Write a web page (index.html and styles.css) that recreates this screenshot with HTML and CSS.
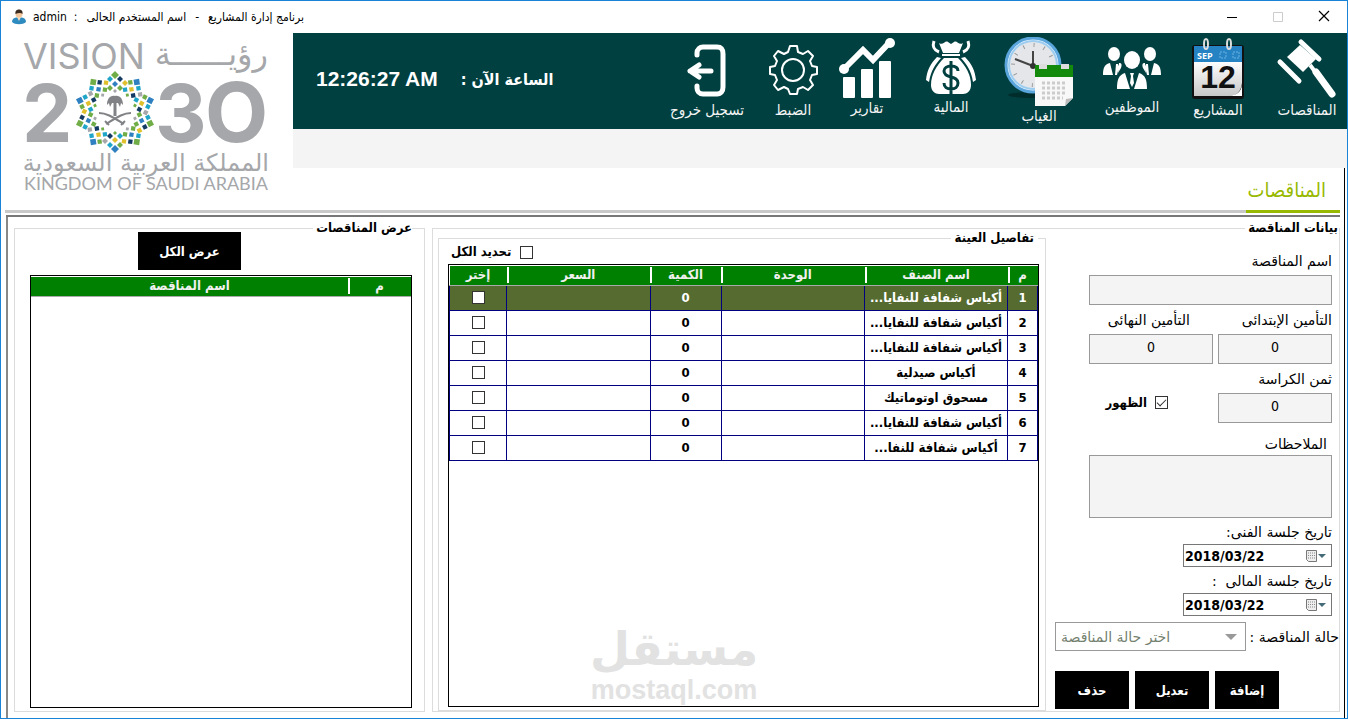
FILE: index.html
```html
<!DOCTYPE html>
<html lang="ar" dir="rtl">
<head>
    <meta charset="UTF-8">
    <meta name="viewport" content="width=device-width, initial-scale=1.0">
    <title>برنامج إدارة المشاريع</title>
    <link rel="stylesheet" href="styles.css">
</head>
<body>
<div class="window">
    <div class="titlebar">
        <div class="window-buttons">
            <button type="button" aria-label="إغلاق"><svg width="12" height="12" viewBox="0 0 12 12"><path d="M1 1l10 10M11 1L1 11" stroke="#000" stroke-width="1.2"/></svg></button>
            <button type="button" aria-label="تكبير" disabled><svg width="10" height="10" viewBox="0 0 10 10"><path d="M.5.5h9v9h-9z" fill="none" stroke="#ccc"/></svg></button>
            <button type="button" aria-label="تصغير"><svg width="10" height="10" viewBox="0 0 10 10"><path d="M0 5.500h10" stroke="#000"/></svg></button>
        </div>
        <div class="window-title">
            <span>برنامج إدارة المشاريع</span><span>-</span><span>اسم المستخدم الحالى</span><span>:</span><span>admin</span>
            <svg width="14" height="16" viewBox="0 0 14 16">
                <path d="M0 13c0-3 2-4 4-4.500h6c2 .5 4 1.500 4 4.500-3 3-11 3-14 0z" fill="#2e8bc0"/>
                <path d="M5 8h4l-2 4z" fill="#f7dcc0"/>
                <circle cx="7" cy="5" r="3.500" fill="#f3c79b"/>
                <path d="M3.500 5C3 1.500 5 .5 7 .5s4 1 3.500 4.500C9 3.500 6 4 3.500 5z" fill="#3b2a20"/>
            </svg>
        </div>
    </div>

    <header class="header">
        <div class="header-main">
            <div class="topbar">
                <nav class="toolbar">
                    <button type="button">
                        <svg width="62" height="63" viewBox="0 0 62 63" fill="#fff">
                            <path d="M11 20l13-12 16 14-13 13z"/>
                            <path d="M25 5l18 17M4 25l19 19" stroke="#fff" stroke-width="5" stroke-linecap="round"/>
                            <path d="M34 28L56 57" stroke="#fff" stroke-width="4"/>
                            <path d="M40 35L56 57" stroke="#fff" stroke-width="7" stroke-linecap="round"/>
                        </svg>
                        <span>المناقصات</span>
                    </button>
                    <button type="button">
                        <svg width="54" height="63" viewBox="0 0 54 63" direction="ltr">
                            <defs>
                                <linearGradient id="page" x2="0" y2="1"><stop offset="0" stop-color="#fff"/><stop offset="1" stop-color="#c8c8c8"/></linearGradient>
                            </defs>
                            <rect x="1" y="8" width="52" height="54" rx="3" fill="#111"/>
                            <path d="M3 24h48v22c-1 8-5 13-13 13H3z" fill="url(#page)"/>
                            <path d="M38 59c8-1 12-4 13-11v11z" fill="#fff"/>
                            <path d="M3 9h48v16H3z" fill="#2583c4"/>
                            <text x="6" y="22" class="cal-month">SEP</text>
                            <path d="M29 15h6v6h-6zM42 15h6v6h-6z" fill="none" stroke="#6db2df" stroke-dasharray="2 1"/>
                            <g fill="none" stroke="#ddd" stroke-width="2"><ellipse cx="15" cy="7" rx="2" ry="5"/><ellipse cx="38" cy="7" rx="2" ry="5"/></g>
                            <text x="27" y="51" text-anchor="middle" class="cal-day">12</text>
                        </svg>
                        <span>المشاريع</span>
                    </button>
                    <button type="button">
                        <svg width="60" height="60" viewBox="0 0 60 60" fill="#fff">
                            <ellipse cx="12" cy="17" rx="6" ry="7"/><ellipse cx="48" cy="17" rx="6" ry="7"/>
                            <path d="M1 38c0-8 2-11 7-12l3 12zM14 27h2l1 3-2 8h-2zM17 26c3 0 3 2 2 5l-3 5z"/>
                            <path d="M59 38c0-8-2-11-7-12l-3 12zM46 27h-2l-1 3 2 8h2zM43 26c-3 0-3 2-2 5l3 5z"/>
                            <ellipse cx="30" cy="23" rx="8" ry="9"/>
                            <path d="M15 52c0-10 2-14 8-16l5 16zM45 52c0-10-2-14-8-16l-5 16zM28 36h4l-1 3 1 7-2 4-2-4 1-7z"/>
                        </svg>
                        <span>الموظفين</span>
                    </button>
                    <button type="button">
                        <svg width="72" height="69" viewBox="0 0 72 69">
                            <ellipse cx="30" cy="58" rx="25" ry="3" fill="#002c2c"/>
                            <circle cx="30" cy="28" r="27" fill="#eef7fd" stroke="#5aa5dc" stroke-width="3"/>
                            <circle cx="30" cy="28" r="24" fill="#e4e6e9" stroke="#9ccdf0" stroke-width="2"/>
                            <circle cx="30" cy="28" r="20" fill="none" stroke="#9a9a9a" stroke-width="4" stroke-dasharray="1 9.470"/>
                            <path d="M30 29V14M30 29L12 22" stroke="#444" stroke-width="2"/>
                            <circle cx="30" cy="29" r="3" fill="#333"/>
                            <path d="M32 31h38v30l-8 8H32z" fill="#f8f8f8"/>
                            <path d="M32 28h38v12H32z" fill="#148a0c"/>
                            <path d="M36 27h8v5h-8zM58 27h8v5h-8z" fill="#ddd"/>
                            <path d="M39 46h25M39 51h25M39 56h25M39 61h21" stroke="#ccc" stroke-width="3" stroke-dasharray="3 2"/>
                            <path d="M62 69l1-7 7-1z" fill="#bbb"/>
                        </svg>
                        <span>الغياب</span>
                    </button>
                    <button type="button">
                        <svg width="52" height="60" viewBox="0 0 52 60" fill="#fff">
                            <path d="M14 6c4 3 6-3 9-1l3 2 3-2c3-2 5 4 9 1l-4 10H18z"/>
                            <path d="M17 17h18v2H17z"/>
                            <path d="M9 4c-2 6 0 9 5 11M43 4c2 6 0 9-5 11" fill="none" stroke="#fff" stroke-width="3"/>
                            <path d="M12 20C5 27 2 34 1 43l3 2c2-12 6-17 12-24zM40 20c7 7 10 14 11 23l-3 2c-2-12-6-17-12-24z"/>
                            <path d="M19 21h14c8 8 13 17 13 27 0 6-4 9-8 9H14c-4 0-8-3-8-9 0-10 5-19 13-27z"/>
                            <path d="M33 34c0-4-3-5-7-5s-7 2-7 5 3 5 7 6 7 2 7 6-3 6-7 6-7-2-7-6M26 24v33" fill="none" stroke="#004040" stroke-width="3"/>
                        </svg>
                        <span>المالية</span>
                    </button>
                    <button type="button">
                        <svg width="56" height="61" viewBox="0 0 56 61" fill="#fff">
                            <rect x="4" y="40" width="12" height="21" rx="1"/><rect x="22" y="32" width="12" height="29" rx="1"/><rect x="40" y="24" width="12" height="37" rx="1"/>
                            <path d="M5 32L24 13l10 10L50 6" fill="none" stroke="#fff" stroke-width="6"/>
                            <circle cx="5" cy="32" r="5"/><circle cx="51" cy="6" r="5"/>
                        </svg>
                        <span>تقارير</span>
                    </button>
                    <button type="button">
                        <svg width="50" height="63" viewBox="0 0 50 63" fill="none" stroke="#fff" stroke-width="2" stroke-linejoin="round">
                            <path d="M22 9h7l1 6 5 2 5-3 5 5-3 5 2 5 5 1v7l-5 1-2 5 3 5-5 5-5-3-5 2-1 5h-7l-2-5-4-2-6 3-4-5 3-5-2-5-5-1v-7l5-1 2-5-3-5 4-5 6 3 4-2z"/>
                            <circle cx="25" cy="33" r="11"/>
                        </svg>
                        <span>الضبط</span>
                    </button>
                    <button type="button">
                        <svg width="44" height="63" viewBox="0 0 44 63" fill="none" stroke="#fff" stroke-width="5" stroke-linecap="round" stroke-linejoin="round">
                            <path d="M12 18v-2c0-4 3-6 6-6h14c5 0 6 3 6 7v33c0 4-2 7-6 7H18c-4 0-6-3-6-6v-2"/>
                            <path d="M26 34H5M14 28l-9 6 9 6"/>
                        </svg>
                        <span>تسجيل خروج</span>
                    </button>
                </nav>
                <div class="clock">
                    <span class="clock-label">الساعة الآن :</span>
                    <time dir="ltr">12:26:27 AM</time>
                </div>
            </div>
            <div class="subbar"></div>
            <div class="tabs"><a href="#bids" class="tab">المناقصات</a></div>
        </div>
        <svg class="logo" width="292" height="176" viewBox="0 0 292 176" direction="ltr" role="img" aria-label="رؤية 2030 المملكة العربية السعودية">
            <defs>
                <g id="petal-a">
                    <path d="M0-41l4 4-4 4-4-4z" fill="#70ad47"/>
                    <path d="M-5-36l3 3-3 3-3-3z" fill="#1fa5c8"/><path d="M5-36l3 3-3 3-3-3z" fill="#123a63"/>
                    <path d="M0-31l3 3-3 3-3-3z" fill="#2e80c0"/><path d="M10-32l3 3-3 3-3-3z" fill="#e0c02c"/>
                    <path d="M-5-27l3 3-3 3-3-3zM5-27l3 3-3 3-3-3z" fill="#70ad47"/><path d="M0-23l2 2-2 2-2-2z" fill="#a5a7aa"/>
                </g>
                <g id="petal-b">
                    <path d="M0-41l4 4-4 4-4-4z" fill="#2e80c0"/>
                    <path d="M-5-36l3 3-3 3-3-3z" fill="#70ad47"/><path d="M5-36l3 3-3 3-3-3z" fill="#1fa5c8"/>
                    <path d="M0-31l3 3-3 3-3-3z" fill="#e0c02c"/><path d="M10-32l3 3-3 3-3-3z" fill="#a5a7aa"/>
                    <path d="M-5-27l3 3-3 3-3-3z" fill="#1fa5c8"/><path d="M5-27l3 3-3 3-3-3z" fill="#123a63"/><path d="M0-23l2 2-2 2-2-2z" fill="#70ad47"/>
                </g>
            </defs>
            <g fill="#a5a7aa">
                <text x="22" y="36" class="logo-vision">VISION</text>
                <text x="267" y="32" class="logo-roya" direction="rtl">رؤيــــــة</text>
                <text x="21" y="109" class="logo-year">2</text>
                <text x="154" y="109" class="logo-year">3</text>
                <text x="204" y="109" class="logo-year logo-ring">O</text>
                <text x="268" y="138" class="logo-ksa-ar" direction="rtl">المملكة العربية السعودية</text>
                <text x="23" y="157" class="logo-ksa">KINGDOM OF SAUDI ARABIA</text>
            </g>
            <g transform="translate(114 79)">
                <use href="#petal-a"/>
                <use href="#petal-b" transform="rotate(36)"/>
                <use href="#petal-b" transform="rotate(72)"/>
                <use href="#petal-a" transform="rotate(108)"/>
                <use href="#petal-a" transform="rotate(144)"/>
                <use href="#petal-b" transform="rotate(180)"/>
                <use href="#petal-b" transform="rotate(216)"/>
                <use href="#petal-a" transform="rotate(252)"/>
                <use href="#petal-b" transform="rotate(288)"/>
                <use href="#petal-a" transform="rotate(324)"/>
                <path d="M0-16c5-1 8 3 8 9l-2-2-1 4-2-4h-6l-2 4-1-4-2 2c0-6 3-10 8-9z" fill="#808285"/>
                <g fill="none" stroke="#808285" stroke-width="2">
                    <path d="M0-12V4" stroke-width="3"/>
                    <path d="M-16 1C-9 1-4 4 9 12M16 1C9 1 4 4-9 12M-10 9l4 4M10 9l-4 4"/>
                </g>
            </g>
        </svg>
    </header>

    <main class="pane" id="bids">
        <fieldset class="group bid">
            <legend>بيانات المناقصة</legend>
            <form class="bid-form">
                <div class="field">
                    <label for="bidName">اسم المناقصة</label>
                    <input type="text" id="bidName">
                </div>
                <div class="field-row">
                    <div class="field">
                        <label for="firstDeposit">التأمين الإبتدائى</label>
                        <input type="text" id="firstDeposit" value="0">
                    </div>
                    <div class="field">
                        <label for="finalDeposit" class="label-inset">التأمين النهائى</label>
                        <input type="text" id="finalDeposit" value="0">
                    </div>
                </div>
                <div class="field-row">
                    <div class="field">
                        <label for="price">ثمن الكراسة</label>
                        <input type="text" id="price" value="0">
                    </div>
                    <label class="check visible-check"><input type="checkbox" checked><span>الظهور</span></label>
                </div>
                <div class="field notes">
                    <label for="notes">الملاحظات</label>
                    <textarea id="notes"></textarea>
                </div>
                <div class="field date-field">
                    <label for="techDate">تاريخ جلسة الفنى:</label>
                    <div class="date-box">
                        <input type="text" id="techDate" value="2018/03/22">
                        <button type="button" aria-label="التقويم">
                            <svg width="22" height="14" viewBox="0 0 22 14"><path d="M1.500 1.500h10v11h-8l-2-2z" fill="#eee" stroke="#777"/><path d="M3 4h7M3 6.500h7M3 9h7" stroke="#888" stroke-dasharray="1 1"/><path d="M13 5h8l-4 4z" fill="#456b78"/></svg>
                        </button>
                    </div>
                </div>
                <div class="field date-field">
                    <label for="financeDate">تاريخ جلسة المالى &nbsp;:</label>
                    <div class="date-box">
                        <input type="text" id="financeDate" value="2018/03/22">
                        <button type="button" aria-label="التقويم">
                            <svg width="22" height="14" viewBox="0 0 22 14"><path d="M1.500 1.500h10v11h-8l-2-2z" fill="#eee" stroke="#777"/><path d="M3 4h7M3 6.500h7M3 9h7" stroke="#888" stroke-dasharray="1 1"/><path d="M13 5h8l-4 4z" fill="#456b78"/></svg>
                        </button>
                    </div>
                </div>
                <div class="status-row">
                    <label for="status">حالة المناقصة :</label>
                    <div class="select-box">
                        <select id="status" dir="ltr"><option>اختر حالة المناقصة</option></select>
                        <svg width="12" height="6" viewBox="0 0 12 6"><path d="M0 0h12L6 6z" fill="#999"/></svg>
                    </div>
                </div>
                <div class="actions">
                    <button type="button" class="btn btn-small">إضافة</button>
                    <button type="button" class="btn">تعديل</button>
                    <button type="button" class="btn">حذف</button>
                </div>
            </form>

            <fieldset class="group details">
                <legend>تفاصيل العينة</legend>
                <div class="check-all"><label class="check"><input type="checkbox"><span>تحديد الكل</span></label></div>
                <div class="grid-box">
                    <table class="grid">
                        <colgroup><col class="col-no"><col class="col-name"><col><col class="col-qty"><col><col class="col-pick"></colgroup>
                        <thead>
                            <tr><th>م</th><th>اسم الصنف</th><th>الوحدة</th><th>الكمية</th><th>السعر</th><th>إختر</th></tr>
                        </thead>
                        <tbody>
                            <tr class="selected"><td>1</td><td>أكياس شفافة للنفايا...</td><td></td><td>0</td><td></td><td><input type="checkbox" aria-label="إختر 1"></td></tr>
                            <tr><td>2</td><td>أكياس شفافة للنفايا...</td><td></td><td>0</td><td></td><td><input type="checkbox" aria-label="إختر 2"></td></tr>
                            <tr><td>3</td><td>أكياس شفافة للنفايا...</td><td></td><td>0</td><td></td><td><input type="checkbox" aria-label="إختر 3"></td></tr>
                            <tr><td>4</td><td>أكياس صيدلية</td><td></td><td>0</td><td></td><td><input type="checkbox" aria-label="إختر 4"></td></tr>
                            <tr><td>5</td><td>مسحوق اوتوماتيك</td><td></td><td>0</td><td></td><td><input type="checkbox" aria-label="إختر 5"></td></tr>
                            <tr><td>6</td><td>أكياس شفافة للنفايا...</td><td></td><td>0</td><td></td><td><input type="checkbox" aria-label="إختر 6"></td></tr>
                            <tr><td>7</td><td>أكياس شفافة للنفا...</td><td></td><td>0</td><td></td><td><input type="checkbox" aria-label="إختر 7"></td></tr>
                        </tbody>
                    </table>
                </div>
            </fieldset>
        </fieldset>

        <fieldset class="group list">
            <legend>عرض المناقصات</legend>
            <button type="button" class="btn btn-all">عرض الكل</button>
            <div class="grid-box">
                <table class="grid">
                    <colgroup><col class="col-id"><col></colgroup>
                    <thead>
                        <tr><th>م</th><th>اسم المناقصة</th></tr>
                    </thead>
                </table>
            </div>
        </fieldset>
    </main>

    <div class="watermark">
        <span class="watermark-ar">مستقل</span>
        <span class="watermark-en" dir="ltr">mostaql.com</span>
    </div>
</div>
</body>
</html>
```
FILE: styles.css
```css
* {
    box-sizing: border-box;
}
body {
    margin: 0;
    background: white;
    color: black;
    font-family: "DejaVu Sans Condensed", "DejaVu Sans", sans-serif;
    font-size: 13px;
}
button, input, select, textarea {
    font-family: inherit;
    font-size: inherit;
}
.window {
    position: relative;
    display: flex;
    flex-direction: column;
    min-height: 100vh;
    border: 1px solid #1883d7;
}

/* title bar */
.titlebar {
    display: flex;
    justify-content: space-between;
    height: 32px;
}
.window-buttons {
    display: flex;
}
.window-buttons button {
    width: 46px;
    border: none;
    background: none;
    padding: 0;
}
.window-title {
    display: flex;
    align-items: center;
    gap: 7px;
    padding-left: 11px;
    font-size: 12px;
}
.window-title span:nth-child(-n+3) {
    padding-left: 2px;
}

/* header */
.header {
    display: flex;
}
.header-main {
    flex: 1;
}
.logo {
    flex: none;
    display: block;
}
.logo-vision {
    font: 36px Inter, Lato, sans-serif;
}
.logo-roya {
    font: 32px "DejaVu Sans", sans-serif;
}
.logo-year {
    font: 700 80px Inter, Lato, sans-serif;
}
.logo-ring {
    font-size: 82px;
}
.logo-ksa-ar {
    font: 24px "DejaVu Sans", sans-serif;
}
.logo-ksa {
    font: 18px Lato, sans-serif;
}
.topbar {
    display: flex;
    justify-content: space-between;
    height: 96px;
    background: #004040;
    color: white;
}
.toolbar {
    display: grid;
    grid-template-columns: 80px 98px 74px 112px 64px 104px 44px 128px;
}
.toolbar button {
    display: flex;
    flex-direction: column;
    align-items: center;
    padding: 4px 0 0;
    border: none;
    background: none;
    color: #f4f4f4;
    font-size: 15px;
    line-height: 20px;
    white-space: nowrap;
    cursor: pointer;
}
.toolbar svg {
    flex: none;
}
.cal-month {
    font: bold 9px "Open Sans", sans-serif;
    fill: white;
}
.cal-day {
    font: bold 32px "Liberation Sans", sans-serif;
    fill: #111;
}
.clock {
    display: flex;
    align-items: center;
    gap: 23px;
    padding: 0 0 4px 23px;
    font-size: 16px;
    font-weight: bold;
}
.clock time {
    font-family: "Liberation Sans", sans-serif;
    font-size: 21px;
}
.subbar {
    height: 39px;
    background: #f4f4f4;
}
.tabs {
    height: 41px;
    margin-right: 2px;
    padding: 0 18px;
    border-right: 1px solid black;
}
.tab {
    color: #97b900;
    font-size: 20px;
    line-height: 44px;
    text-decoration: none;
}

/* main pane */
.pane {
    flex: 1;
    display: flex;
    gap: 7px;
    margin-right: 2px;
    padding: 10px 4px 6px 13px;
    border-right: 1px solid black;
    background:
        linear-gradient(#97b900, #97b900) right 4px top 1px / 94px 3px no-repeat,
        linear-gradient(#c8c8c8, #c8c8c8) right 4px top 1px / calc(100% - 8px) 3px no-repeat,
        linear-gradient(#777, #777) right 4px top 6px / calc(100% - 9px) 2px no-repeat,
        linear-gradient(#888, #888) left 5px top 6px / 2px 100% no-repeat;
}
.group {
    margin: 0;
    min-width: 0;
    border: 1px solid #dcdcdc;
}
.group > legend {
    padding: 0 1px 0 3px;
    font-weight: bold;
    line-height: 18px;
}
.bid {
    flex: 1;
    display: flex;
    padding: 0 0 0 5px;
}
.bid-form {
    flex: none;
    width: 293px;
    padding-left: 9px;
    padding-top: 14px;
}
.field {
    margin: 0 7px 5px 34px;
}
.field label,
.status-row label {
    display: block;
    font-family: "DejaVu Sans", sans-serif;
    font-size: 14px;
    line-height: 20px;
    white-space: nowrap;
}
.field > label {
    margin-bottom: 4px;
}
.field input,
.field textarea {
    display: block;
    width: 100%;
    height: 30px;
    border: 1px solid #999;
    border-radius: 0;
    background: #f4f4f4;
    padding: 0 4px 4px;
    font-size: 14px;
    text-align: center;
}
.field-row {
    display: grid;
    grid-template-columns: 114px 1fr;
    gap: 5px;
    margin: 0 7px 5px 34px;
}
.field-row .field {
    margin: 0;
}
.field .label-inset {
    padding-right: 23px;
}
.check {
    display: flex;
    align-items: center;
    gap: 8px;
    font-weight: bold;
}
.visible-check {
    padding: 12px 45px 0 0;
}
input[type="checkbox"] {
    appearance: none;
    flex: none;
    display: block;
    width: 13px;
    height: 13px;
    margin: 0;
    border: 1px solid #333;
    background: white;
}
input[type="checkbox"]:checked::after {
    content: "";
    display: block;
    width: 8px;
    height: 4px;
    margin: 2px 1px;
    border: solid #333;
    border-width: 0 0 1px 1px;
    transform: rotate(-45deg);
}
.notes {
    margin-top: 11px;
    margin-bottom: 4px;
}
.notes label {
    margin-bottom: 1px;
    padding-right: 5px;
}
.field textarea {
    height: 63px;
    resize: none;
}
.date-field {
    margin-bottom: 4px;
}
.date-field > label {
    margin-bottom: 2px;
}
.date-box {
    display: flex;
    direction: ltr;
    width: 149px;
    height: 23px;
    border: 1px solid #777;
}
.date-box input {
    height: 21px;
    border: none;
    background: white;
    padding: 0 1px;
    font-weight: bold;
    text-align: left;
}
.date-box button {
    display: flex;
    align-items: center;
    border: none;
    background: none;
    padding: 0 4px 0 0;
}
.status-row {
    display: flex;
    align-items: center;
    gap: 4px;
    margin-top: 6px;
}
.select-box {
    position: relative;
    flex: 1;
}
.select-box select {
    display: block;
    appearance: none;
    width: 100%;
    height: 29px;
    border: 1px solid #999;
    border-radius: 0;
    background: white;
    color: #73806e;
    padding: 0 5px;
    font-family: "DejaVu Sans", sans-serif;
    font-size: 14px;
}
.select-box svg {
    position: absolute;
    top: 12px;
    right: 9px;
}
.actions {
    display: flex;
    justify-content: flex-end;
    gap: 6px;
    margin-top: 20px;
}
.btn {
    width: 74px;
    height: 38px;
    border: none;
    background: black;
    color: white;
    font-weight: bold;
    cursor: pointer;
}
.btn-small {
    width: 64px;
}

/* details and list grids */
.details {
    flex: 1;
    display: flex;
    flex-direction: column;
    margin-top: -6px;
    padding: 0 6px 3px 9px;
}
.details > legend {
    margin-right: 1px;
    padding: 0 4px;
    line-height: 14px;
}
.check-all {
    display: flex;
    justify-content: flex-end;
    padding: 0 3px 5px;
    line-height: 14px;
}
.check-all .check {
    gap: 9px;
}
.grid-box {
    flex: 1;
    border: 1px solid black;
    padding: 1px 0 0;
}
.grid {
    width: 100%;
    table-layout: fixed;
    border-collapse: collapse;
}
.col-no {
    width: 30px;
}
.col-name {
    width: 143px;
}
.col-qty {
    width: 71px;
}
.col-pick {
    width: 57px;
}
.col-id {
    width: 63px;
}
.grid th {
    height: 19px;
    padding: 0;
    border-bottom: 1px solid #aaa;
    background: linear-gradient(white, white) left center / 2px 16px no-repeat green;
    color: #f0f0f0;
    line-height: 18px;
}
.grid th:last-child {
    background: green;
}
.grid td {
    height: 25px;
    padding: 0;
    border: 1px solid navy;
    font-weight: bold;
    text-align: center;
    white-space: nowrap;
}
.grid td input[type="checkbox"] {
    margin: 0 auto;
}
.grid .selected td {
    background: #556b2f;
    color: white;
}
.list {
    flex: none;
    width: 411px;
    display: flex;
    flex-direction: column;
    padding: 0 12px 3px 15px;
}
.list > legend {
    padding: 0 0 0 3px;
}
.btn-all {
    width: 103px;
    margin: -5px 171px 5px 0;
}

/* watermark over the page */
.watermark {
    position: absolute;
    bottom: 14px;
    left: 0;
    right: 0;
    display: flex;
    flex-direction: column;
    align-items: center;
    color: #e2e2e2;
    font-weight: bold;
    pointer-events: none;
}
.watermark-ar {
    font-family: "DejaVu Sans", sans-serif;
    font-size: 46px;
    line-height: 54px;
}
.watermark-en {
    font-family: "Liberation Sans", sans-serif;
    font-size: 27px;
    line-height: 28px;
}
```
